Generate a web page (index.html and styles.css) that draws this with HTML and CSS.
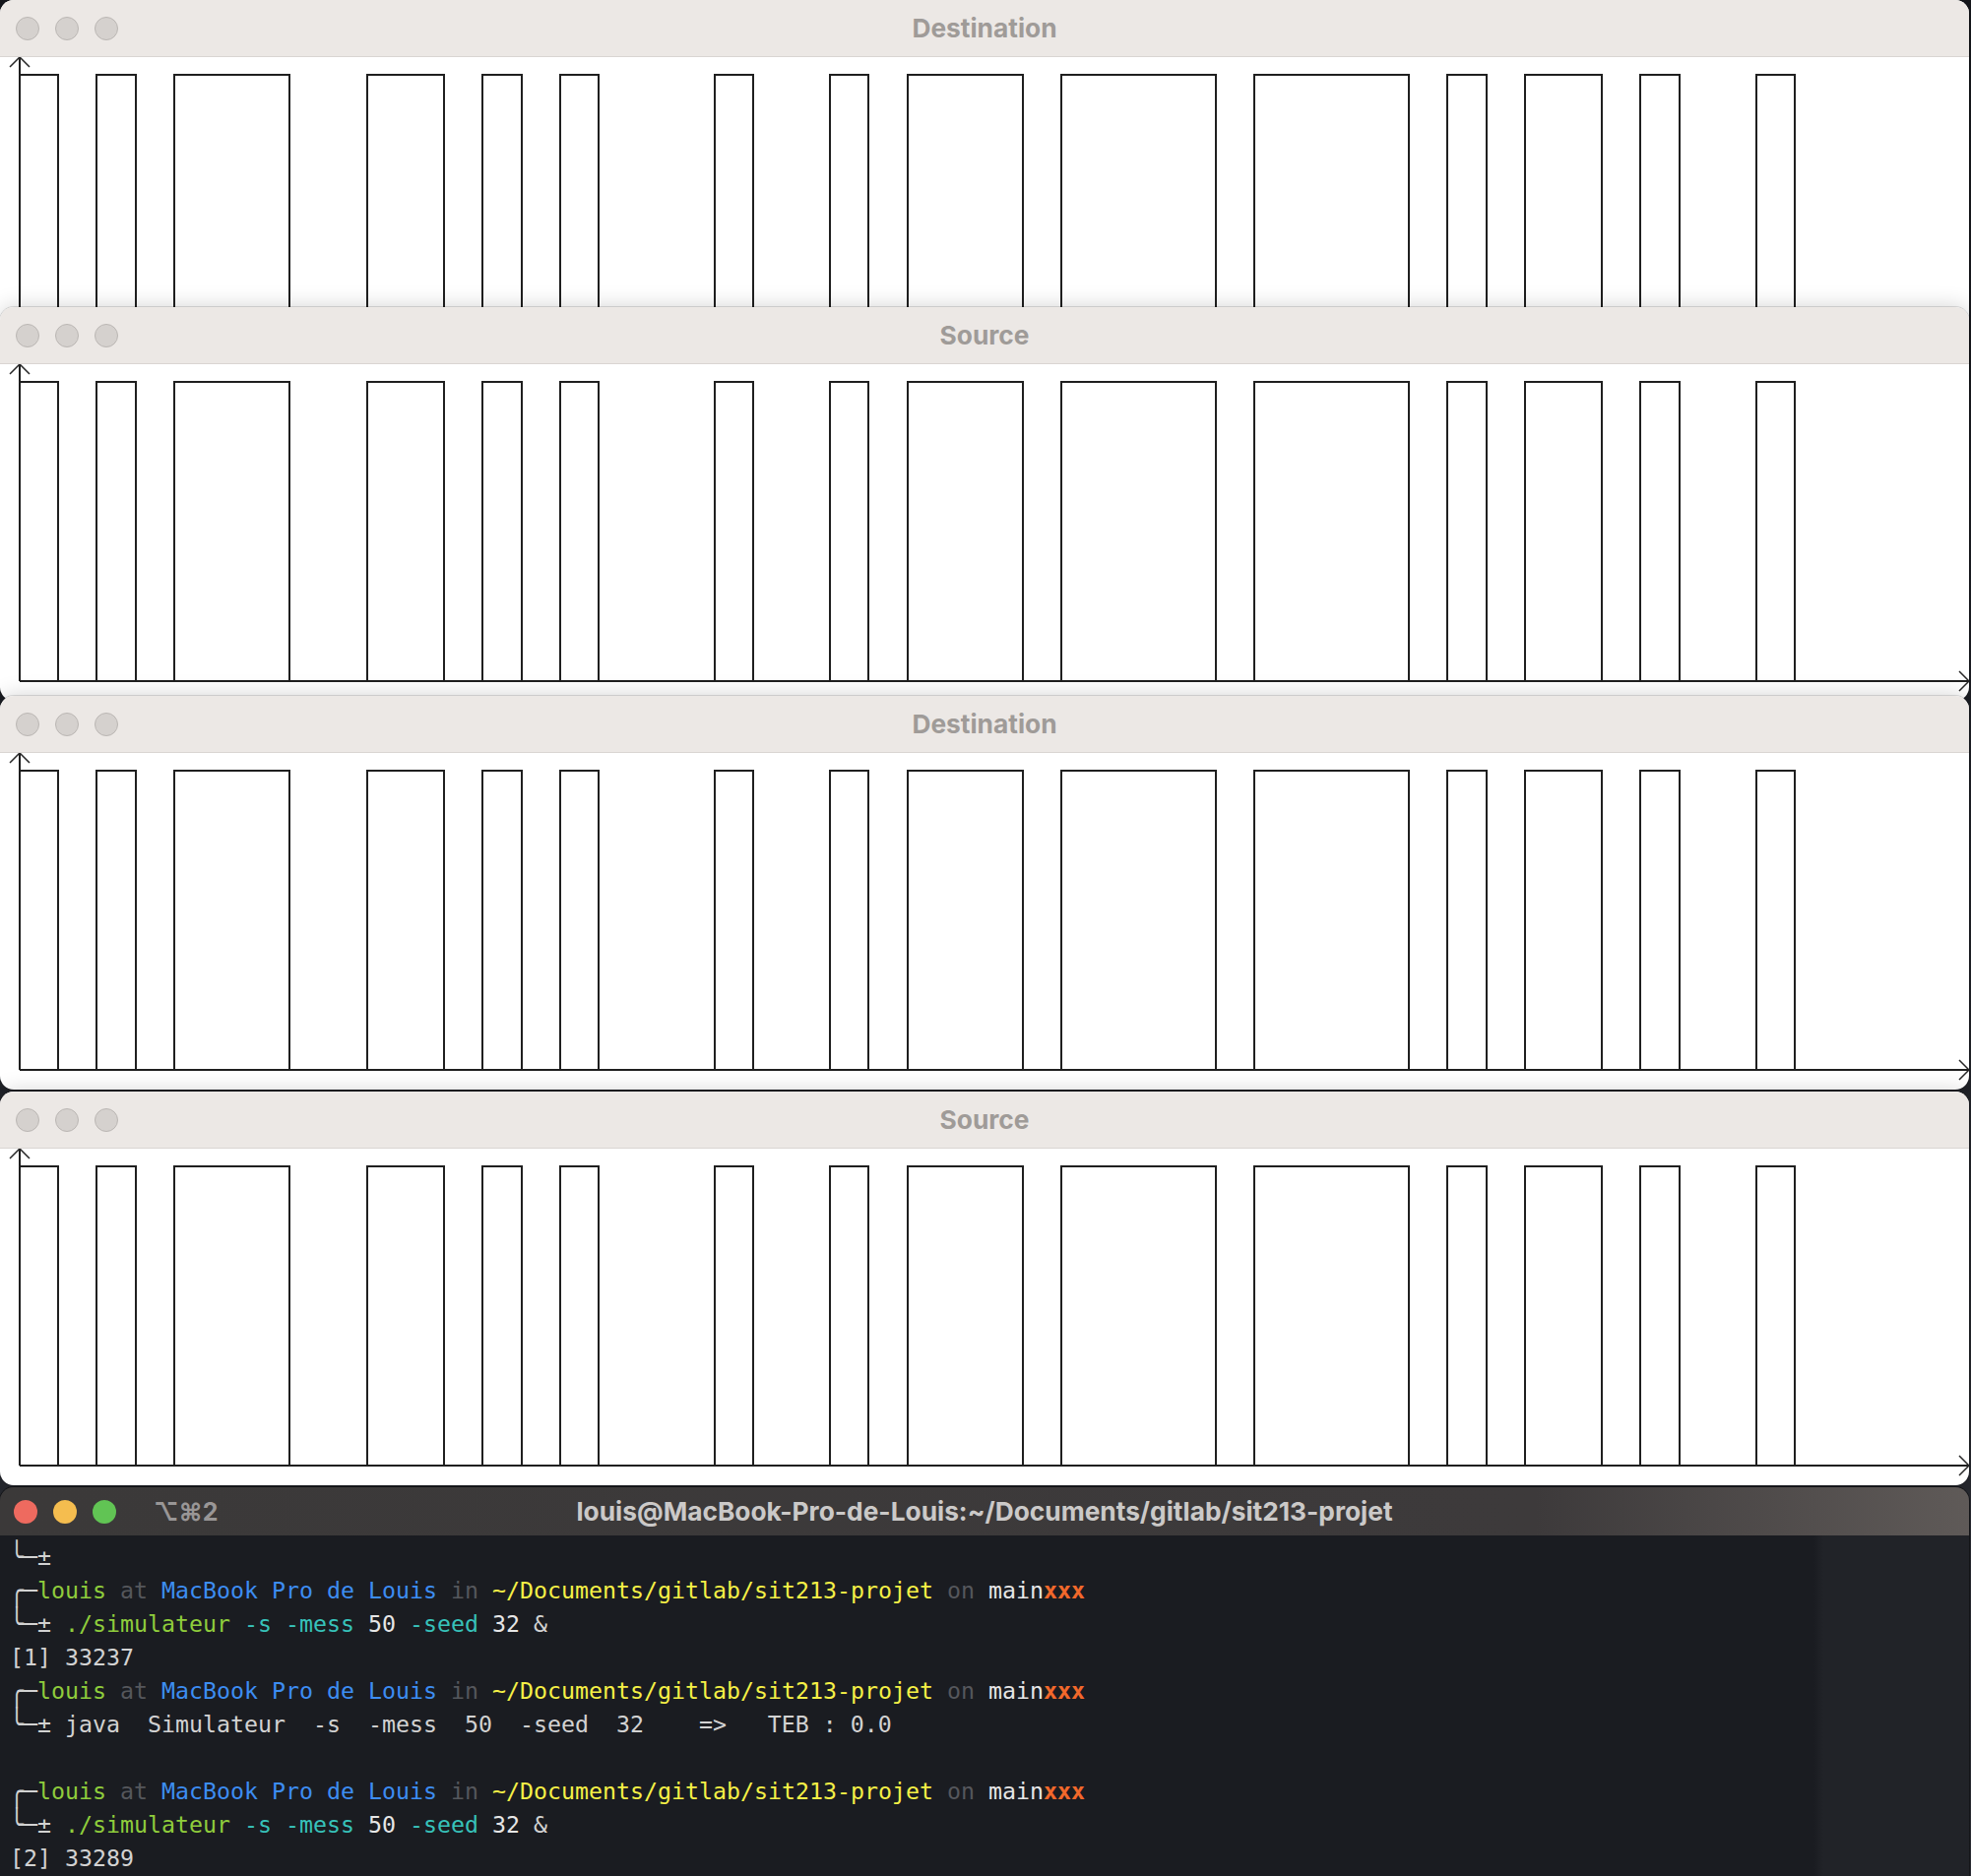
FILE: index.html
```html
<!DOCTYPE html>
<html lang="fr">
<head>
<meta charset="utf-8">
<title>Simulateur</title>
<link rel="stylesheet" href="styles.css">
</head>
<body>
<svg class="defs" width="0" height="0" aria-hidden="true">
  <defs>
    <g id="plot">
      <path class="sig" d="M20 322 V18 H59 V322 H98 V18 H138 V322 H177 V18 H294 V322 H373 V18 H451 V322 H490 V18 H530 V322 H569 V18 H608 V322 H726 V18 H765 V322 H843 V18 H882 V322 H922 V18 H1039 V322 H1078 V18 H1235 V322 H1274 V18 H1431 V322 H1470 V18 H1510 V322 H1549 V18 H1627 V322 H1666 V18 H1706 V322 H1784 V18 H1823 V322 H1980"/>
      <path class="axis" d="M20 322 V0 M20 322 H2000"/>
      <path class="arrow" d="M10 10 L20 0 L30 10 M1990 312 L2000 322 L1990 332"/>
    </g>
  </defs>
</svg>
<div class="desktop">
  <section class="win w1">
    <header class="titlebar">
      <div class="lights"><span class="dot"></span><span class="dot"></span><span class="dot"></span></div>
      <h1 class="title">Destination</h1>
      <div></div>
    </header>
    <svg class="plot" viewBox="0 0 2000 342"><use href="#plot"/></svg>
  </section>
  <section class="win w2">
    <header class="titlebar">
      <div class="lights"><span class="dot"></span><span class="dot"></span><span class="dot"></span></div>
      <h1 class="title">Source</h1>
      <div></div>
    </header>
    <svg class="plot" viewBox="0 0 2000 342"><use href="#plot"/></svg>
  </section>
  <section class="win w3">
    <header class="titlebar">
      <div class="lights"><span class="dot"></span><span class="dot"></span><span class="dot"></span></div>
      <h1 class="title">Destination</h1>
      <div></div>
    </header>
    <svg class="plot" viewBox="0 0 2000 342"><use href="#plot"/></svg>
  </section>
  <section class="win w4">
    <header class="titlebar">
      <div class="lights"><span class="dot"></span><span class="dot"></span><span class="dot"></span></div>
      <h1 class="title">Source</h1>
      <div></div>
    </header>
    <svg class="plot" viewBox="0 0 2000 342"><use href="#plot"/></svg>
  </section>
  <section class="term">
    <header class="term-bar">
      <div class="term-left">
        <div class="lights">
          <span class="tl red"></span><span class="tl yellow"></span><span class="tl green"></span>
        </div>
        <span class="shortcut">⌥⌘2</span>
      </div>
      <h1 class="term-title">louis@MacBook-Pro-de-Louis:~/Documents/gitlab/sit213-projet</h1>
      <div></div>
    </header>
<pre class="term-body"><span class="bx">╰</span>─±
<span class="bx">╭</span>─<span class="g">louis</span> <span class="d">at</span> <span class="b">MacBook Pro de Louis</span> <span class="d">in</span> <span class="y">~/Documents/gitlab/sit213-projet</span> <span class="d">on</span> <span class="w">main</span><span class="o">xxx</span>
<span class="bx">╰</span>─± <span class="g">./simulateur</span> <span class="c">-s</span> <span class="c">-mess</span> <span class="w">50</span> <span class="c">-seed</span> <span class="w">32</span> &amp;
[1] 33237
<span class="bx">╭</span>─<span class="g">louis</span> <span class="d">at</span> <span class="b">MacBook Pro de Louis</span> <span class="d">in</span> <span class="y">~/Documents/gitlab/sit213-projet</span> <span class="d">on</span> <span class="w">main</span><span class="o">xxx</span>
<span class="bx">╰</span>─± java  Simulateur  -s  -mess  50  -seed  32    =>   TEB : 0.0

<span class="bx">╭</span>─<span class="g">louis</span> <span class="d">at</span> <span class="b">MacBook Pro de Louis</span> <span class="d">in</span> <span class="y">~/Documents/gitlab/sit213-projet</span> <span class="d">on</span> <span class="w">main</span><span class="o">xxx</span>
<span class="bx">╰</span>─± <span class="g">./simulateur</span> <span class="c">-s</span> <span class="c">-mess</span> <span class="w">50</span> <span class="c">-seed</span> <span class="w">32</span> &amp;
[2] 33289</pre>
  </section>
</div>
</body>
</html>
```

FILE: styles.css
```css
* {
  box-sizing: border-box;
  margin: 0;
  padding: 0;
}

html,
body {
  width: 2002px;
  height: 1906px;
  overflow: hidden;
  background: #1d1f25;
}

.defs {
  position: absolute;
  width: 0;
  height: 0;
}

.desktop {
  position: relative;
  width: 2002px;
  height: 1906px;
  overflow: hidden;
  background: linear-gradient(#15171c, #2a2c33);
}

/* ---------- signal windows ---------- */
.win {
  position: absolute;
  left: 0;
  width: 2000px;
  height: 400px;
  background: #fff;
  border-radius: 14px;
  overflow: hidden;
  display: flex;
  flex-direction: column;
  box-shadow: 0 0 22px rgba(0, 0, 0, 0.18), 0 0 0 1px rgba(0, 0, 0, 0.12);
}

.w1 { top: 0; }
.w2 { top: 312px; }
.w3 { top: 707px; }
.w4 { top: 1109px; }

.titlebar {
  flex: none;
  height: 58px;
  background: #ece8e5;
  border-bottom: 1px solid #d9d5d2;
  display: grid;
  grid-template-columns: 1fr auto 1fr;
  align-items: center;
}

.lights {
  display: flex;
  align-items: center;
  gap: 16px;
  padding-left: 16px;
}

.dot {
  width: 24px;
  height: 24px;
  border-radius: 50%;
  background: #d5d1ce;
  border: 1px solid #bbb7b4;
}

.title {
  font: 700 26.3px Inter, "Liberation Sans", sans-serif;
  color: #9f9b98;
}

.plot {
  display: block;
  width: 2000px;
  height: 342px;
}

.sig,
.axis {
  fill: none;
  stroke: #1f1f1f;
  stroke-width: 2;
}

.arrow {
  fill: none;
  stroke: #262626;
  stroke-width: 1.5;
}

/* ---------- terminal ---------- */
.term {
  position: absolute;
  left: 0;
  top: 1511px;
  width: 2000px;
  height: 420px;
  border-radius: 14px 14px 0 0;
  overflow: hidden;
  display: flex;
  flex-direction: column;
  box-shadow: 0 0 0 1px rgba(0, 0, 0, 0.5);
}

.term-bar {
  flex: none;
  height: 49px;
  background: linear-gradient(to right, #3b3939 0%, #3d3a3b 78%, #5f5a58 100%);
  display: grid;
  grid-template-columns: 1fr auto 1fr;
  align-items: center;
}

.term-left {
  display: flex;
  align-items: center;
}

.term-left .lights {
  padding-left: 14px;
}

.tl {
  width: 24px;
  height: 24px;
  border-radius: 50%;
}

.red { background: #ee6a5f; }
.yellow { background: #f5bd4f; }
.green { background: #61c454; }

.shortcut {
  margin-left: 38px;
  font: 700 25px Inter, "DejaVu Sans", sans-serif;
  color: #999696;
}

.term-title {
  font: 700 26.3px Inter, "Liberation Sans", sans-serif;
  color: #cbc9c8;
}

.term-body {
  flex: 1;
  padding: 5px 10px 0;
  background: linear-gradient(to right, #1a1c21 0, #1a1c21 1842px, #212328 1852px);
  font-family: "DejaVu Sans Mono", "Liberation Mono", monospace;
  font-size: 23.25px;
  line-height: 34px;
  color: #d2d2d2;
  white-space: pre;
}

.bx {
  display: inline-block;
  transform: scaleY(1.27);
}

.g { color: #8fcd3c; }
.d { color: #55575c; }
.b { color: #3d8df2; }
.y { color: #f5f046; }
.w { color: #e6e6e6; }
.o { color: #f2682b; font-weight: 700; }
.c { color: #37c2ba; }
```
